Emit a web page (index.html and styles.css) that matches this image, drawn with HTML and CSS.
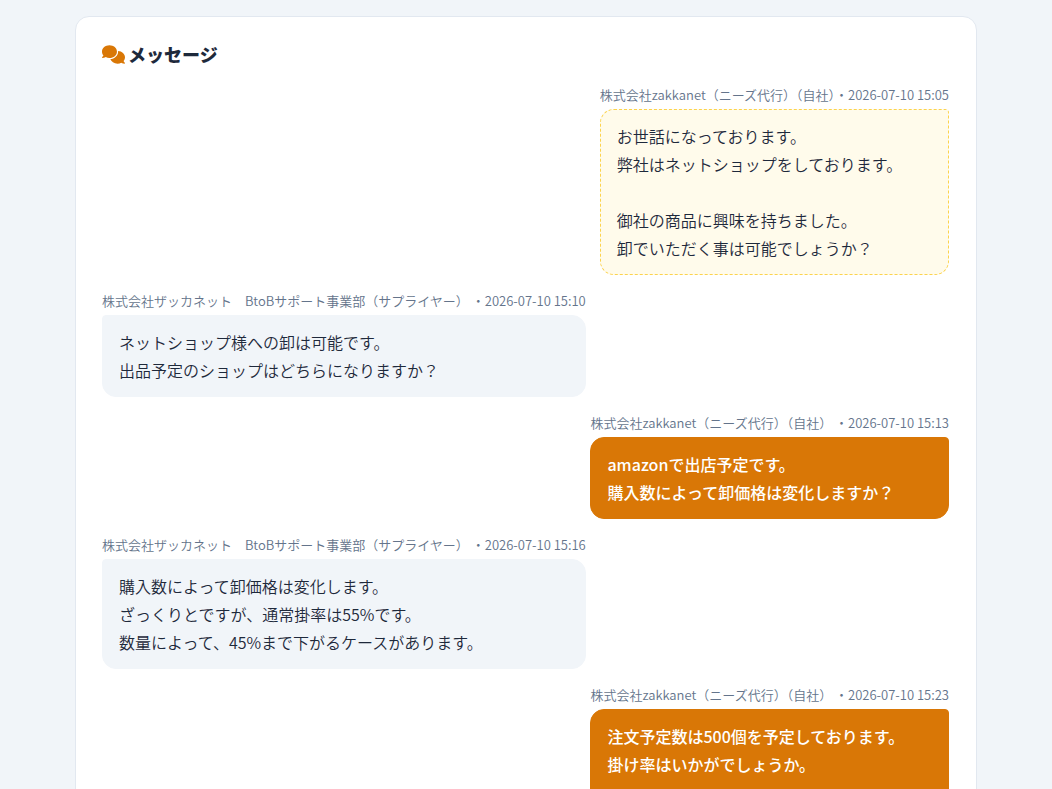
FILE: index.html
```html
<!DOCTYPE html>
<html lang="ja">
<head>
<meta charset="utf-8">
<meta name="viewport" content="width=device-width, initial-scale=1">
<title>メッセージ</title>
<link rel="stylesheet" href="styles.css">
</head>
<body>
<main class="card">
  <h1 class="title"><svg class="title-icon" viewBox="0 0 640 512" aria-hidden="true"><path d="M208 352c114.900 0 208-78.800 208-176S322.900 0 208 0S0 78.800 0 176c0 38.600 14.700 74.300 39.600 103.400c-3.500 9.400-8.700 17.700-14.200 24.700c-4.800 6.200-9.700 11-13.300 14.300c-1.800 1.600-3.300 2.900-4.300 3.700c-.5 .4-.9 .7-1.100 .8l-.2 .2C1 327.200-1.400 334.400 .8 340.900S9.100 352 16 352c21.800 0 43.800-5.600 62.100-12.500c9.200-3.500 17.800-7.400 25.200-11.400C134.100 343.300 169.800 352 208 352zM448 176c0 112.300-99.100 196.900-216.500 207C255.800 457.400 336.400 512 432 512c38.200 0 73.900-8.700 104.700-23.900c7.500 4 16 7.900 25.200 11.400c18.300 6.900 40.300 12.500 62.100 12.500c6.900 0 13.100-4.500 15.200-11.100c2.100-6.600-.2-13.800-5.800-17.900l-.2-.2c-.2-.2-.6-.4-1.100-.8c-1-.8-2.500-2-4.300-3.700c-3.600-3.300-8.500-8.100-13.300-14.300c-5.500-7-10.700-15.400-14.200-24.700c24.900-29 39.600-64.700 39.600-103.400c0-92.800-84.900-168.900-192.600-175.500c.4 5.100 .6 10.300 .6 15.500z"/></svg>メッセージ</h1>
  <div class="thread">
    <article class="message own">
      <p class="meta">株式会社zakkanet（ニーズ代行）（自社）・2026-07-10 15:05</p>
      <div class="bubble draft">お世話になっております。<br>弊社はネットショップをしております。<br><br>御社の商品に興味を持ちました。<br>卸でいただく事は可能でしょうか？</div>
    </article>
    <article class="message other">
      <p class="meta">株式会社ザッカネット　BtoBサポート事業部（サプライヤー） ・2026-07-10 15:10</p>
      <div class="bubble">ネットショップ様への卸は可能です。<br>出品予定のショップはどちらになりますか？</div>
    </article>
    <article class="message own">
      <p class="meta">株式会社zakkanet（ニーズ代行）（自社） ・2026-07-10 15:13</p>
      <div class="bubble">amazonで出店予定です。<br>購入数によって卸価格は変化しますか？</div>
    </article>
    <article class="message other">
      <p class="meta">株式会社ザッカネット　BtoBサポート事業部（サプライヤー） ・2026-07-10 15:16</p>
      <div class="bubble">購入数によって卸価格は変化します。<br>ざっくりとですが、通常掛率は55%です。<br>数量によって、45%まで下がるケースがあります。</div>
    </article>
    <article class="message own">
      <p class="meta">株式会社zakkanet（ニーズ代行）（自社） ・2026-07-10 15:23</p>
      <div class="bubble">注文予定数は500個を予定しております。<br>掛け率はいかがでしょうか。<br><br></div>
    </article>
  </div>
</main>
</body>
</html>
```
FILE: styles.css
```css
* { box-sizing: border-box; }
body {
  margin: 0;
  padding: 16px;
  background: #f1f5f9;
  color: #1e293b;
  font-family: "Noto Sans CJK JP", sans-serif;
  font-weight: 350;
}
.card {
  max-width: 902px;
  margin: 0 auto;
  padding: 24px 27px 24px 26px;
  background: #fff;
  border: 1px solid #e2e8f0;
  border-radius: 14px;
}
.title {
  display: flex;
  align-items: center;
  gap: 3px;
  margin: 0 0 17px;
  font-size: 18px;
  line-height: 27px;
  font-weight: 900;
}
.title-icon { width: 23px; height: 19px; fill: #d97706; }
.thread { display: flex; flex-direction: column; gap: 16px; }
.message { max-width: 85%; }
.own { align-self: flex-end; }
.other { align-self: flex-start; }
.meta {
  margin: 0 0 4px;
  color: #64748b;
  font-size: 13px;
  line-height: 20px;
}
.bubble {
  padding: 12px 16px;
  background: #f1f5f9;
  border: 1px solid #f1f5f9;
  border-radius: 4px 14px 14px 14px;
  font-size: 16px;
  line-height: 28px;
}
.own .bubble {
  background: #d97706;
  border-color: #d97706;
  color: #fff;
  font-weight: 500;
  border-radius: 14px 4px 14px 14px;
}
.own .draft {
  background: #fffbeb;
  border: 1px dashed #fcd34d;
  color: #1e293b;
  font-weight: 350;
}
```
